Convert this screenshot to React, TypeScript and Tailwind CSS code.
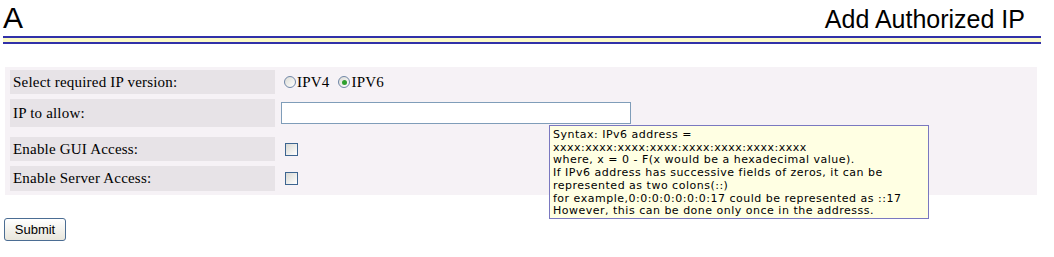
const rows = [
  { label: "Select required IP version:", kind: "radio" },
  { label: "IP to allow:", kind: "input" },
  { label: "Enable GUI Access:", kind: "check" },
  { label: "Enable Server Access:", kind: "check" },
];

function Radio({ checked, label }: { checked?: boolean; label: string }) {
  return (
    <span className="flex items-center">
      <span className="w-[12px] h-[12px] rounded-full border border-[#6f86a6] bg-gradient-to-br from-[#dcdcd6] to-white flex items-center justify-center">
        {checked && <span className="w-[5px] h-[5px] rounded-full bg-[#2ea02e]" />}
      </span>
      <span className="ml-[1px]">{label}</span>
    </span>
  );
}

function Checkbox() {
  return (
    <span className="block w-[13px] h-[13px] ml-[4px] border border-[#3d6590] bg-gradient-to-br from-[#d9d9d3] to-white" />
  );
}

export default function App() {
  return (
    <div className="relative w-[1054px] h-[257px] bg-white text-black overflow-hidden">
      {/* Header */}
      <div className="h-[36px] pt-[1px] pl-[3px] pr-[29px] flex justify-between items-baseline font-['Liberation_Sans',Arial,sans-serif]">
        <span className="text-[30px] leading-[34px]">A</span>
        <span className="text-[25px] leading-[34px]">Add Authorized IP</span>
      </div>
      <div className="ml-[3px] w-[1038px] border-t-2 border-b-2 border-[#3131a9] h-[8px] bg-[#fbfac6]" />

      {/* Form panel */}
      <div className="ml-[5px] mt-[23px] w-[1032px] bg-[#f6f2f6] pl-[5px] pt-[3px] pb-[4px] flex flex-col font-['Liberation_Serif','Times_New_Roman',serif] text-[15px] tracking-[0.2px]">
        {rows.map((r, i) => (
          <div
            key={r.label}
            className={`flex gap-[6px] ${i === 1 ? "mt-[5px] h-[28px]" : i === 2 ? "mt-[10px] h-[24px]" : i === 3 ? "mt-[5px] h-[25px]" : "h-[24px]"}`}
          >
            <div className="w-[265px] bg-[#e7e3e7] flex items-center pl-[3px]">{r.label}</div>
            <div className="flex items-center gap-[9px]">
              {r.kind === "radio" && (
                <>
                  <span className="ml-[3px]"><Radio label="IPV4" /></span>
                  <Radio checked label="IPV6" />
                </>
              )}
              {r.kind === "input" && (
                <input
                  type="text"
                  className="w-[350px] h-[22px] border border-[#7f9db9] bg-white outline-none"
                />
              )}
              {r.kind === "check" && <Checkbox />}
            </div>
          </div>
        ))}
      </div>

      <button className="ml-[4px] mt-[23px] w-[62px] h-[23px] rounded-[3px] border border-[#4b6d93] bg-gradient-to-b from-white to-[#e8e6dc] text-[13px] font-['Liberation_Sans',Arial,sans-serif] leading-none">
        Submit
      </button>

      {/* Tooltip */}
      <div className="absolute left-[549px] top-[125px] w-[380px] h-[94px] border border-[#7a78c0] bg-[#ffffe3] px-[3px] pt-[3px] font-['DejaVu_Sans',sans-serif] text-[11px] tracking-[0.5px] leading-[12.7px] whitespace-pre">
        {`Syntax: IPv6 address =
xxxx:xxxx:xxxx:xxxx:xxxx:xxxx:xxxx:xxxx
where, x = 0 - F(x would be a hexadecimal value).
If IPv6 address has successive fields of zeros, it can be
represented as two colons(::)
for example,0:0:0:0:0:0:0:17 could be represented as ::17
However, this can be done only once in the addresss.`}
      </div>
    </div>
  );
}
